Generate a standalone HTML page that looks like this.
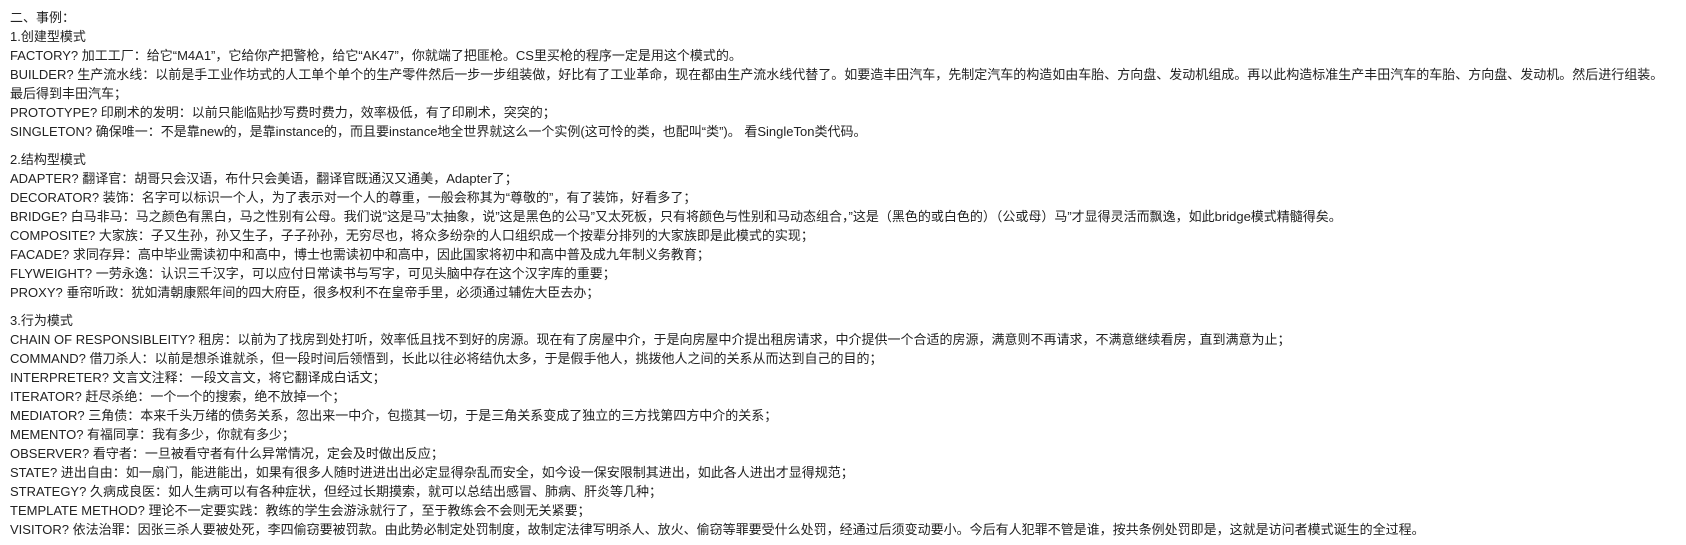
<!DOCTYPE html>
<html><head><meta charset="utf-8">
<style>
html,body{margin:0;padding:0;background:#fff;}
body{width:1686px;height:545px;overflow:hidden;font-family:"Liberation Sans","Noto Sans CJK SC",sans-serif;font-size:13px;color:#222;}
.w{position:absolute;left:10px;top:8px;white-space:nowrap;}
p{margin:0;line-height:19px;}
.g{height:9px;}
</style></head><body>
<div class="w">
<p>二、事例：</p>
<p>1.创建型模式</p>
<p>FACTORY? 加工工厂：给它“M4A1”，它给你产把警枪，给它“AK47”，你就端了把匪枪。CS里买枪的程序一定是用这个模式的。</p>
<p>BUILDER? 生产流水线：以前是手工业作坊式的人工单个单个的生产零件然后一步一步组装做，好比有了工业革命，现在都由生产流水线代替了。如要造丰田汽车，先制定汽车的构造如由车胎、方向盘、发动机组成。再以此构造标准生产丰田汽车的车胎、方向盘、发动机。然后进行组装。</p>
<p>最后得到丰田汽车；</p>
<p>PROTOTYPE? 印刷术的发明：以前只能临贴抄写费时费力，效率极低，有了印刷术，突突的；</p>
<p>SINGLETON? 确保唯一：不是靠new的，是靠instance的，而且要instance地全世界就这么一个实例(这可怜的类，也配叫“类”)。 看SingleTon类代码。</p>
<div class="g"></div>
<p>2.结构型模式</p>
<p>ADAPTER? 翻译官：胡哥只会汉语，布什只会美语，翻译官既通汉又通美，Adapter了；</p>
<p>DECORATOR? 装饰：名字可以标识一个人，为了表示对一个人的尊重，一般会称其为“尊敬的”，有了装饰，好看多了；</p>
<p>BRIDGE? 白马非马：马之颜色有黑白，马之性别有公母。我们说”这是马”太抽象，说”这是黑色的公马”又太死板，只有将颜色与性别和马动态组合，”这是（黑色的或白色的）（公或母）马”才显得灵活而飘逸，如此bridge模式精髓得矣。</p>
<p>COMPOSITE? 大家族：子又生孙，孙又生子，子子孙孙，无穷尽也，将众多纷杂的人口组织成一个按辈分排列的大家族即是此模式的实现；</p>
<p>FACADE? 求同存异：高中毕业需读初中和高中，博士也需读初中和高中，因此国家将初中和高中普及成九年制义务教育；</p>
<p>FLYWEIGHT? 一劳永逸：认识三千汉字，可以应付日常读书与写字，可见头脑中存在这个汉字库的重要；</p>
<p>PROXY? 垂帘听政：犹如清朝康熙年间的四大府臣，很多权利不在皇帝手里，必须通过辅佐大臣去办；</p>
<div class="g"></div>
<p>3.行为模式</p>
<p>CHAIN OF RESPONSIBLEITY? 租房：以前为了找房到处打听，效率低且找不到好的房源。现在有了房屋中介，于是向房屋中介提出租房请求，中介提供一个合适的房源，满意则不再请求，不满意继续看房，直到满意为止；</p>
<p>COMMAND? 借刀杀人：以前是想杀谁就杀，但一段时间后领悟到，长此以往必将结仇太多，于是假手他人，挑拨他人之间的关系从而达到自己的目的；</p>
<p>INTERPRETER? 文言文注释：一段文言文，将它翻译成白话文；</p>
<p>ITERATOR? 赶尽杀绝：一个一个的搜索，绝不放掉一个；</p>
<p>MEDIATOR? 三角债：本来千头万绪的债务关系，忽出来一中介，包揽其一切，于是三角关系变成了独立的三方找第四方中介的关系；</p>
<p>MEMENTO? 有福同享：我有多少，你就有多少；</p>
<p>OBSERVER? 看守者：一旦被看守者有什么异常情况，定会及时做出反应；</p>
<p>STATE? 进出自由：如一扇门，能进能出，如果有很多人随时进进出出必定显得杂乱而安全，如今设一保安限制其进出，如此各人进出才显得规范；</p>
<p>STRATEGY? 久病成良医：如人生病可以有各种症状，但经过长期摸索，就可以总结出感冒、肺病、肝炎等几种；</p>
<p>TEMPLATE METHOD? 理论不一定要实践：教练的学生会游泳就行了，至于教练会不会则无关紧要；</p>
<p>VISITOR? 依法治罪：因张三杀人要被处死，李四偷窃要被罚款。由此势必制定处罚制度，故制定法律写明杀人、放火、偷窃等罪要受什么处罚，经通过后须变动要小。今后有人犯罪不管是谁，按共条例处罚即是，这就是访问者模式诞生的全过程。</p>
</div>
</body></html>
